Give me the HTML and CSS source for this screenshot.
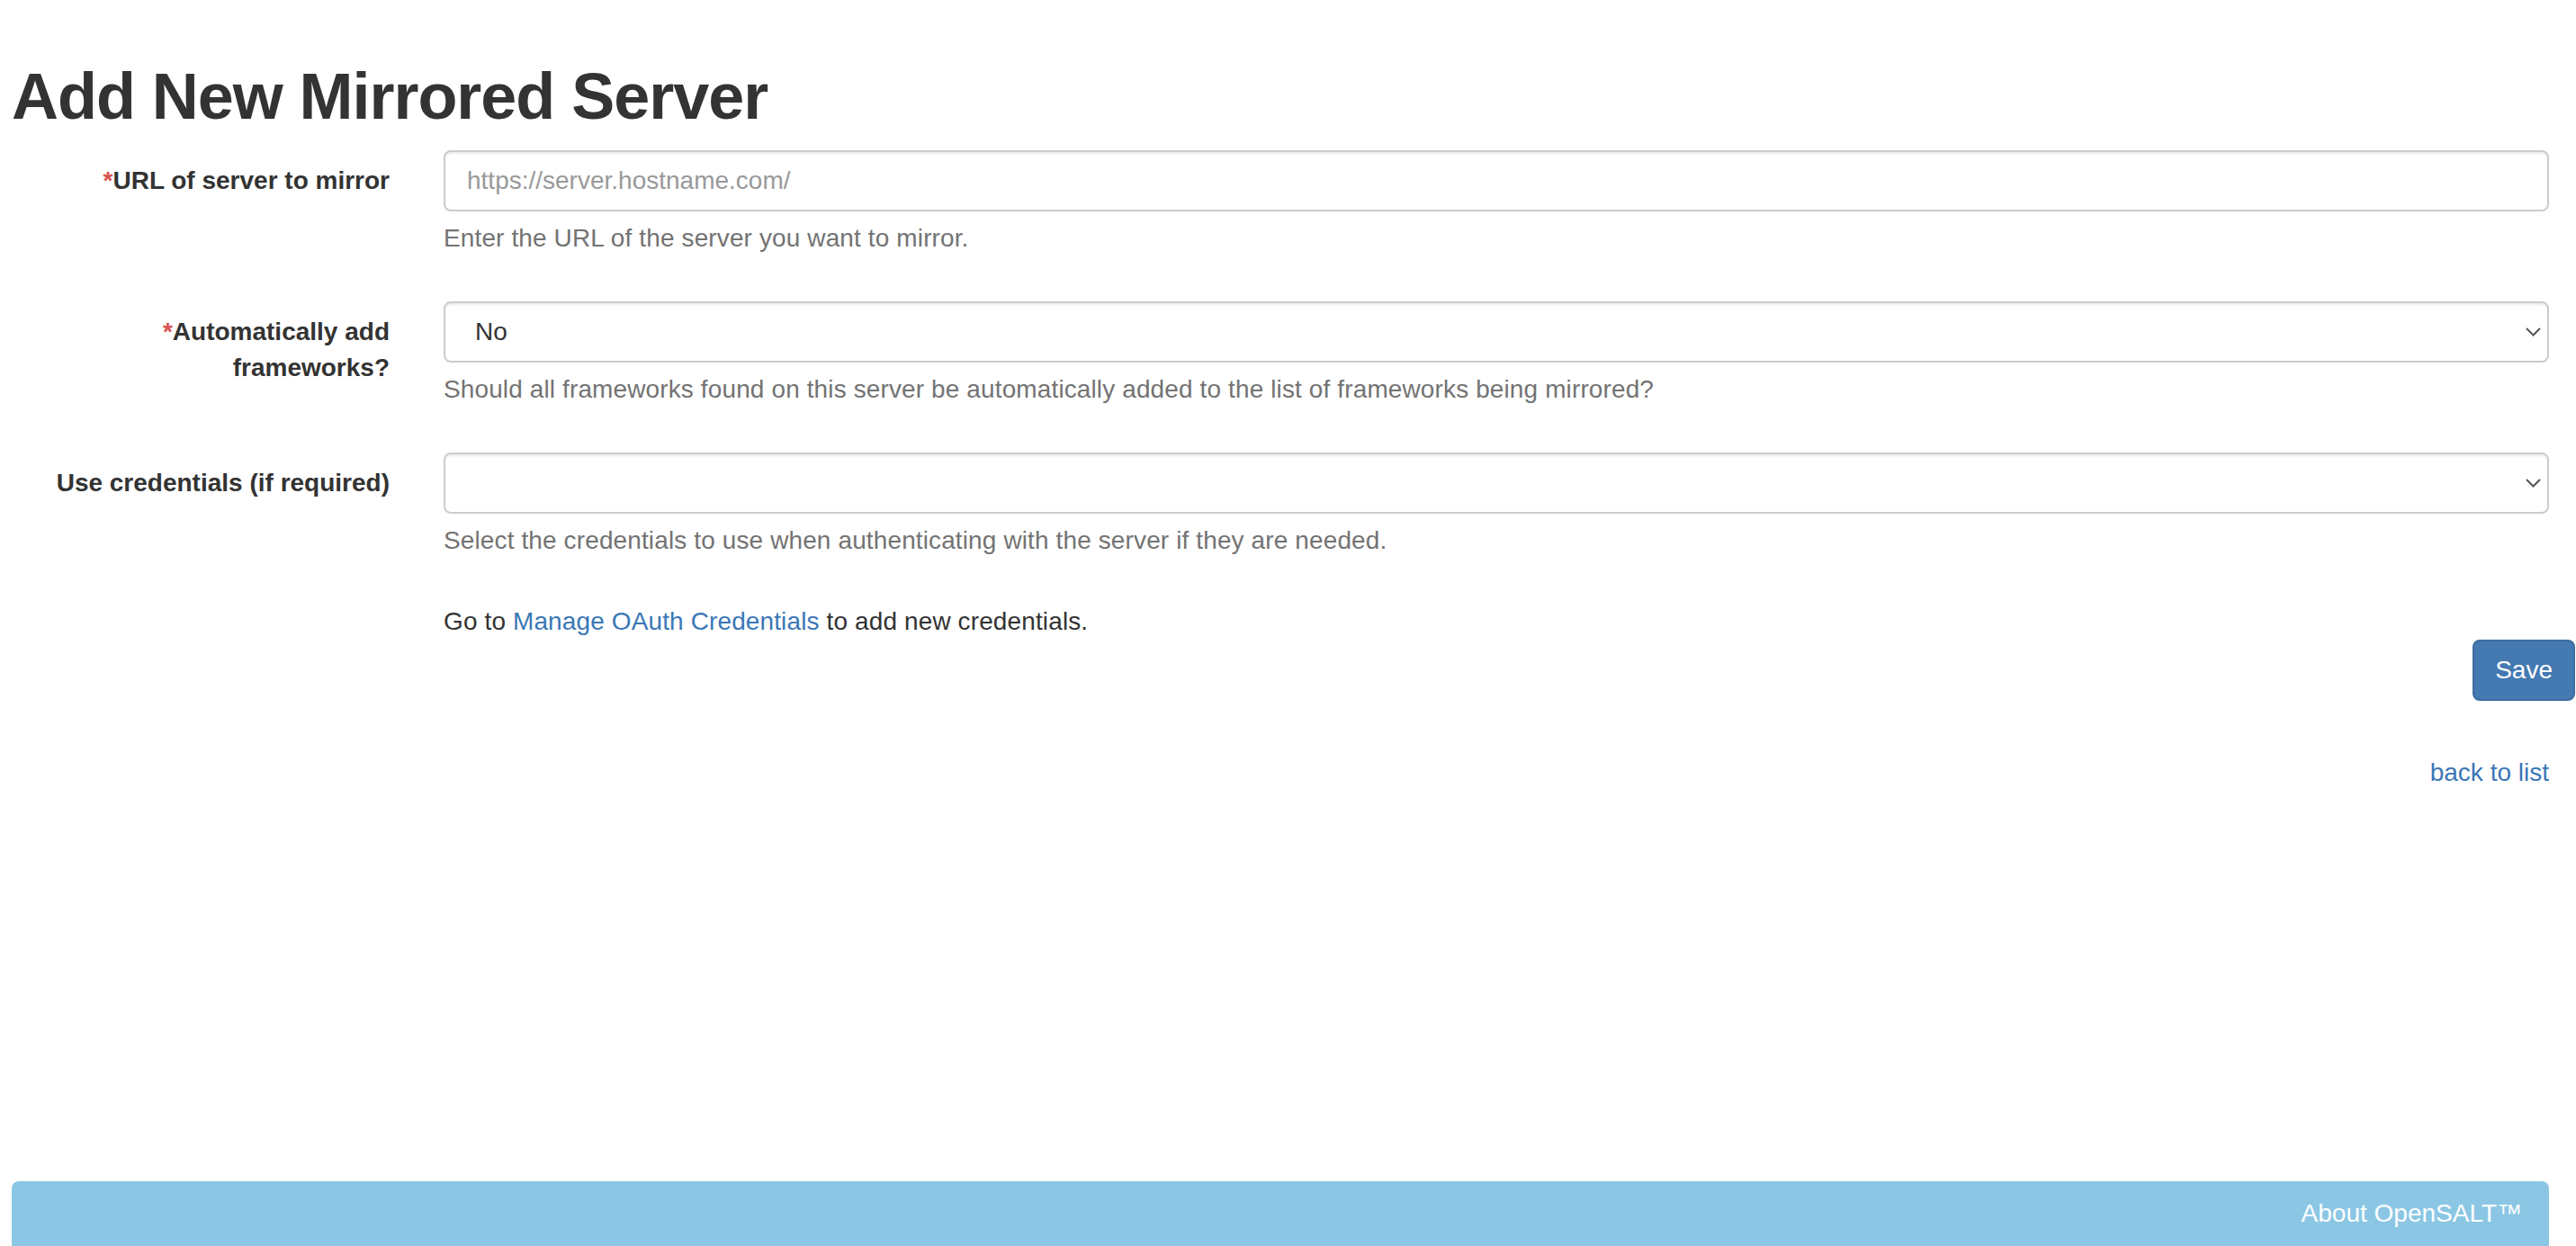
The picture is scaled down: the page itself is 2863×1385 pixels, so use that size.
FILE: index.html
```html
<!DOCTYPE html>
<html lang="en">
<head>
<meta charset="utf-8">
<title>Add New Mirrored Server</title>
<link rel="stylesheet" href="styles.css">
</head>
<body>
<div class="page">
  <main class="content">
    <h1 class="title">Add New Mirrored Server</h1>
    <form class="form">
      <div class="form-group">
        <label class="control-label"><span class="req">*</span>URL of server to mirror</label>
        <div class="field">
          <input class="form-control" type="text" placeholder="https://server.hostname.com/">
          <p class="help">Enter the URL of the server you want to mirror.</p>
        </div>
      </div>
      <div class="form-group">
        <label class="control-label"><span class="req">*</span>Automatically add frameworks?</label>
        <div class="field">
          <div class="select-wrap">
            <select class="form-control select"><option>No</option><option>Yes</option></select>
            <svg class="chevron" viewBox="0 0 17 10" width="17" height="10"><polyline points="1,1 8.5,8.5 16,1" fill="none" stroke="#555" stroke-width="2"/></svg>
          </div>
          <p class="help">Should all frameworks found on this server be automatically added to the list of frameworks being mirrored?</p>
        </div>
      </div>
      <div class="form-group">
        <label class="control-label">Use credentials (if required)</label>
        <div class="field">
          <div class="select-wrap">
            <select class="form-control select"><option></option></select>
            <svg class="chevron" viewBox="0 0 17 10" width="17" height="10"><polyline points="1,1 8.5,8.5 16,1" fill="none" stroke="#555" stroke-width="2"/></svg>
          </div>
          <p class="help">Select the credentials to use when authenticating with the server if they are needed.</p>
        </div>
      </div>
      <div class="note-row">
        <div></div>
        <p class="note">Go to <a href="#" class="link">Manage OAuth Credentials</a> to add new credentials.</p>
      </div>
      <div class="actions"><button type="button" class="btn-save">Save</button></div>
    </form>
    <div class="back"><a href="#" class="link">back to list</a></div>
  </main>
  <footer class="footer"><span class="footer-link">About OpenSALT™</span></footer>
</div>
</body>
</html>
```

FILE: styles.css
```css
* { box-sizing: border-box; }
html, body { margin: 0; padding: 0; background: #fff; }
body {
  font-family: "Liberation Sans", Arial, Helvetica, sans-serif;
  font-size: 28px;
  line-height: 40px;
  color: #333;
}
.page {
  min-height: 100vh;
  display: flex;
  flex-direction: column;
}
.content {
  padding: 30px 30px 0 13px;
}
.title {
  font-size: 72px;
  line-height: 79.2px;
  font-weight: 700;
  margin: 38px 0 20px;
  color: #333;
  letter-spacing: -1.05px;
}
.form { margin: 0; }
.form-group {
  display: grid;
  grid-template-columns: 420px 1fr;
  column-gap: 60px;
  margin-bottom: 30px;
}
.control-label {
  text-align: right;
  font-weight: 700;
  padding-top: 14px;
  color: #333;
}
.req { color: #d9534f; }
.field { min-width: 0; }
.form-control {
  display: block;
  width: 100%;
  height: 68px;
  padding: 12px 24px;
  font-family: "Liberation Sans", Arial, Helvetica, sans-serif;
  font-size: 28px;
  line-height: 40px;
  color: #555;
  background: #fff;
  border: 2px solid #ccc;
  border-radius: 8px;
  box-shadow: inset 0 2px 2px rgba(0,0,0,.075);
  margin: 0;
  outline: none;
}
.form-control::placeholder { color: #999; }
.select-wrap { position: relative; }
.select {
  -webkit-appearance: none;
  appearance: none;
  padding-left: 33px;
  color: #333;
}
.chevron {
  position: absolute;
  right: 9px;
  top: 29px;
  pointer-events: none;
}
.help {
  margin: 10px 0 20px;
  color: #737373;
  letter-spacing: 0.12px;
}
.note-row {
  display: grid;
  grid-template-columns: 420px 1fr;
  column-gap: 60px;
}
.note { margin: 0; letter-spacing: 0.12px; }
.link { color: #3a77b6; text-decoration: none; }
.actions {
  display: flex;
  justify-content: flex-end;
  margin-right: -29px;
}
.btn-save {
  font-family: "Liberation Sans", Arial, Helvetica, sans-serif;
  font-size: 28px;
  line-height: 40px;
  height: 68px;
  padding: 12px 23px;
  color: #fff;
  background: #4479b2;
  border: 2px solid #3d6da1;
  border-radius: 8px;
}
.back {
  text-align: right;
  margin-top: 60px;
}
.footer {
  margin: auto 30px 0 13px;
  height: 72px;
  background: #8bc7e4;
  border-radius: 8px 8px 0 0;
  padding: 16px 30px 0;
  text-align: right;
  color: #fff;
}
```
